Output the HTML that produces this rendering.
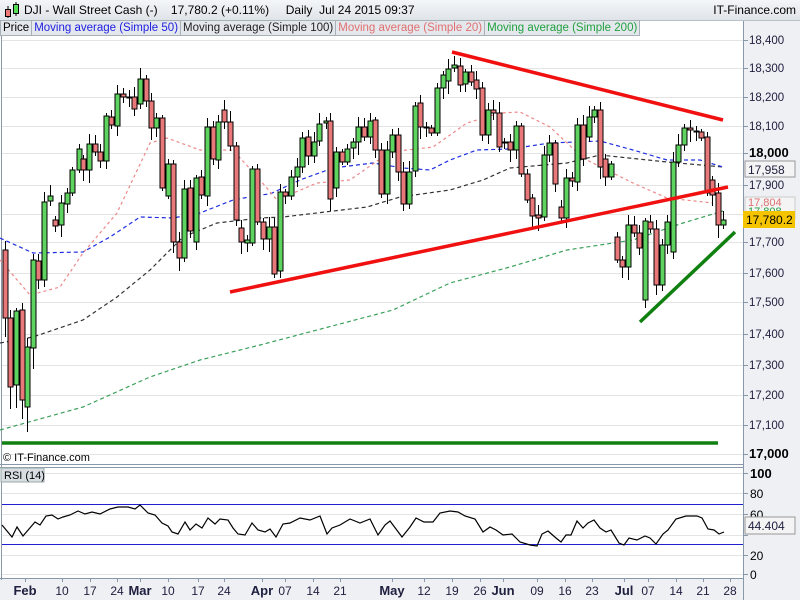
<!DOCTYPE html>
<html><head><meta charset="utf-8"><style>
body{margin:0;width:800px;height:600px;overflow:hidden;background:#fff;font-family:"Liberation Sans",sans-serif;}
#hdr{position:absolute;left:0;top:0;width:800px;height:20px;background:linear-gradient(#f4f6f8,#dfe4e9);border-bottom:1px solid #b8c0c8;font-size:12px;}
#leg{position:absolute;left:0;top:20px;height:16px;font-size:11.5px;display:flex;}
#leg span{border:1px solid #a8b0b8;background:#e4e8ec;padding:0 2px;line-height:14px;margin-right:-1px;}
svg{position:absolute;left:0;top:0}
</style></head><body>
<svg id="s" width="800" height="600"></svg>
<div id="hdr"><span style="position:absolute;left:24px;top:3px">DJI - Wall Street Cash (-) &nbsp;&nbsp; 17,780.2 (+0.11%) &nbsp;&nbsp;&nbsp; Daily &nbsp;Jul 24 2015 09:37</span><span style="position:absolute;right:4px;top:3px">IT-Finance.com</span>
<svg width="20" height="20" style="left:3px"><line x1="5" y1="6" x2="5" y2="18" stroke="#000"/><rect x="2.5" y="9.5" width="5" height="7" fill="#e77" stroke="#000"/><line x1="13" y1="2" x2="13" y2="16" stroke="#000"/><rect x="10.5" y="4.5" width="5" height="9" fill="#5d5" stroke="#000"/></svg></div>
<div id="leg"><span>Price</span><span style="color:#2020e0">Moving average (Simple 50)</span><span style="color:#222">Moving average (Simple 100)</span><span style="color:#e07070">Moving average (Simple 20)</span><span style="color:#20a040">Moving average (Simple 200)</span></div>
<script>
var s='';
function L(x1,y1,x2,y2,c,w,d){s+='<line x1="'+x1+'" y1="'+y1+'" x2="'+x2+'" y2="'+y2+'" stroke="'+c+'" stroke-width="'+(w||1)+'"'+(d?' stroke-dasharray="'+d+'"':'')+'/>';}
function T(x,y,t,c,sz,b){s+='<text x="'+x+'" y="'+y+'" fill="'+(c||'#000')+'" font-size="'+(sz||12)+'"'+(b?' font-weight="bold"':'')+'>'+t+'</text>';}
s+='<rect x="743" y="20" width="57" height="580" fill="#eef0f3"/><rect x="0" y="578" width="743" height="22" fill="#eef0f3"/>';
L(743.5,20,743.5,600,'#8898a8');L(1.5,36,1.5,580,'#8898a8');
L(0,464.5,743,464.5,'#8898a8');L(0,467.5,743,467.5,'#8898a8');L(0,578.5,743,578.5,'#8898a8');
var pl=[[18400,40],[18300,68],[18200,97],[18100,126],[18000,153],[17900,185],[17800,214],[17700,242],[17600,273],[17500,302],[17400,334],[17300,365],[17200,395],[17100,425],[17000,454]];
pl.forEach(function(p){L(2,p[1]+.5,743,p[1]+.5,'#e4e4e4');L(743,p[1]+.5,748,p[1]+.5,'#8898a8');
 if(p[0]!=17800)T(749,p[1]+4,(p[0]+'').replace(/(\d\d)(\d\d\d)/,'$1,$2'),p[0]%1000?'#202040':'#000',p[0]%1000?11.5:13,p[0]%1000==0);});
[[100,473],[80,493],[60,514],[40,535],[20,555],[0,574]].forEach(function(p){L(2,p[1]+.5,743,p[1]+.5,'#e4e4e4');L(743,p[1]+.5,748,p[1]+.5,'#8898a8');if(p[0]!=40)T(750,p[1]+5,p[0],'#000',p[0]==100?13:12,p[0]==100);});
L(2,504.5,743,504.5,'#2020d0');L(2,544.5,743,544.5,'#2020d0');
// MAs
function P(pts,c,d){s+='<polyline fill="none" stroke="'+c+'" stroke-width="1.2" stroke-dasharray="'+d+'" points="'+pts+'"/>';}
P('0,430 83,407 150,377 200,360 260,345 393,310 450,283 510,267 567,250 633,240 683,223 723,211','#3aa05a','4,3');
P('0,343 33,337 83,320 117,297 150,270 183,237 217,223 260,218 283,217 367,207 400,197 450,190 483,180 510,168 567,163 600,155 667,162 723,167','#333','4,3');
P('0,238 33,253 83,252 110,237 140,217 173,218 200,213 233,200 260,195 270,194 300,180 333,168 373,163 403,168 430,170 450,160 477,150 510,149 550,143 600,141 633,150 667,160 700,160 723,167','#2030e0','4,3');
P('0,260 30,295 60,287 83,253 117,213 150,143 167,138 200,150 233,150 260,180 277,200 317,183 350,180 390,152 433,147 467,123 500,113 520,112 550,127 583,158 633,183 667,198 713,203','#e88','3,3');
// candles [x,top,bottom,green]
var c=[[5,250,318,0],[10,318,387,0],[16,311,385,1],[22,310,400,0],[27,347,407,1],[33,260,348,1],[38,261,280,0],[44,202,280,1],[50,196,201,1],[55,220,226,0],[61,203,225,1],[67,193,204,1],[72,170,193,1],[79,149,170,1],[83,159,170,0],[89,144,170,1],[95,144,152,0],[100,152,161,0],[106,116,161,1],[111,117,125,0],[117,94,126,1],[123,94,97,0],[129,97,98,0],[134,97,109,0],[140,79,104,1],[146,79,101,0],[151,101,128,0],[156,118,128,1],[162,118,188,0],[168,164,196,1],[173,164,242,0],[179,242,258,0],[184,189,258,1],[190,188,231,0],[196,178,242,1],[201,177,195,0],[207,127,196,1],[213,127,159,0],[218,122,160,1],[224,110,122,0],[230,122,146,0],[236,146,220,0],[241,228,242,0],[247,240,243,1],[252,169,243,1],[257,169,222,0],[263,222,239,0],[269,227,239,1],[274,227,274,0],[280,192,271,1],[285,192,196,0],[291,177,196,1],[297,167,177,1],[302,138,167,1],[308,137,156,0],[314,142,156,1],[319,124,141,1],[326,121,123,1],[330,121,199,0],[336,152,188,1],[342,152,162,0],[347,149,162,1],[353,142,148,1],[358,127,142,1],[364,127,137,0],[370,121,137,1],[375,120,150,0],[381,150,194,0],[387,150,194,1],[392,135,152,1],[398,135,172,0],[403,172,204,0],[409,172,204,1],[415,106,171,1],[420,103,127,0],[426,127,128,0],[431,128,133,0],[437,88,133,1],[443,75,88,1],[448,69,81,1],[454,65,68,1],[460,66,85,0],[465,72,84,1],[471,72,82,0],[476,80,89,0],[482,88,135,0],[488,110,135,1],[493,110,113,0],[499,113,147,0],[504,142,143,0],[510,142,150,0],[516,126,150,1],[521,126,174,0],[527,174,200,0],[532,198,216,0],[538,215,218,0],[544,155,217,1],[549,143,155,1],[555,143,184,0],[561,207,218,0],[566,178,218,1],[572,178,181,0],[577,125,182,1],[583,125,159,0],[589,117,137,1],[594,110,117,1],[600,110,167,0],[605,159,177,0],[611,164,177,1],[617,237,260,0],[622,260,267,0],[628,225,267,1],[634,225,233,0],[639,233,248,0],[645,221,300,1],[650,222,229,0],[656,229,285,0],[662,245,285,1],[667,222,245,1],[673,162,252,1],[678,145,162,1],[684,128,145,1],[690,128,130,0],[696,131,132,0],[701,132,138,0],[707,137,193,0],[712,180,195,0],[718,193,225,0],[723,220,225,1]];
var r=7;c.forEach(function(k,i){r=(r*37+11)%17;var h=k[1]-3-(r%9),l=k[2]+3+((r*3)%11);if(i<6)l+=15;
 L(k[0]+.5,h,k[0]+.5,l,'#000');s+='<rect x="'+(k[0]-2)+'" y="'+k[1]+'" width="5" height="'+Math.max(1,k[2]-k[1])+'" fill="'+(k[3]?'#5fd35f':'#e8787a')+'" stroke="#000" stroke-width="1"/>';});
L(452,52,723,120,'#f01010',3.5);L(230,292,728,187,'#f01010',3.5);L(640,322,735,232,'#108010',3.5);L(2,443,718,443,'#108010',3.5);
// price labels
s+='<rect x="745" y="161" width="50" height="16" fill="#f4f4f4" stroke="#999"/>';T(748,174,'17,958','#202040',12);
s+='<rect x="745" y="197" width="50" height="22" fill="#f4f4f4" stroke="#ccc"/>';T(748,206,'17,804','#e07070',11);T(748,215,'17,808','#20a040',11);
s+='<rect x="743" y="211" width="52" height="17" fill="#f5c400"/>';T(746,224,'17,780.2','#000',12);
s+='<rect x="745" y="517" width="50" height="17" fill="#f4f4f4" stroke="#999"/>';T(748,530,'44.404','#202040',12);
// RSI
P('2,525 12,537 17,527 23,536 35,522 40,525 46,516 52,515 58,519 63,517 70,515 78,511 85,514 92,512 100,514 110,509 118,507 128,507 135,509 140,505 148,513 155,515 162,523 168,526 172,532 178,534 185,522 190,530 196,524 202,528 208,518 215,524 220,519 228,520 233,528 238,534 245,535 252,523 258,530 265,532 270,529 276,537 283,524 290,523 300,518 310,520 320,516 327,534 332,528 340,525 350,519 360,523 370,519 378,535 385,525 390,521 402,537 410,527 416,518 424,522 433,522 440,513 450,511 458,512 465,516 475,519 483,532 490,527 496,530 503,535 512,534 520,542 530,545 537,546 542,534 548,531 556,538 561,542 566,535 571,535 577,521 583,528 588,523 594,520 600,528 606,532 611,530 619,543 624,545 629,538 637,540 645,536 650,538 656,544 663,534 668,530 676,519 686,516 697,516 702,518 708,529 714,530 719,534 724,532','#000','none');
s+='<rect x="1" y="468" width="43" height="14" fill="#d8dde2" stroke="#9aa"/>';T(4,479,'RSI (14)','#000',11);
T(3,461,'© IT-Finance.com','#000',11);
var xl=[[25,'Feb',1],[62,'10'],[90,'17'],[117,'24'],[140,'Mar',1],[168,'10'],[198,'17'],[224,'24'],[262,'Apr',1],[285,'07'],[313,'14'],[340,'21'],[392,'May',1],[424,'12'],[452,'19'],[480,'26'],[503,'Jun',1],[537,'09'],[565,'16'],[592,'23'],[624,'Jul',1],[648,'07'],[676,'14'],[703,'21'],[730,'28']];
xl.forEach(function(a){L(a[0]+.5,578,a[0]+.5,582,'#8898a8');s+='<text x="'+a[0]+'" y="595" text-anchor="middle" font-size="'+(a[2]?13:12)+'"'+(a[2]?' font-weight="bold"':'')+' fill="#202040">'+a[1]+'</text>';});
document.getElementById('s').innerHTML=s;
</script>
</body></html>
